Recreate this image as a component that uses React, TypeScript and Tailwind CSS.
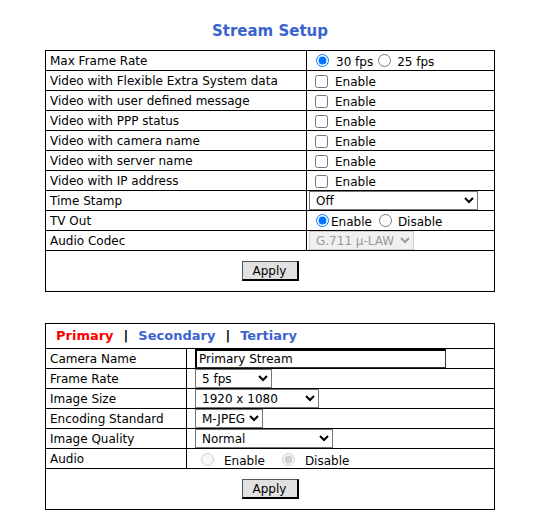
const cell = "border border-black h-[20px] p-0 align-middle";

function Label({ children }: { children: React.ReactNode }) {
  return (
    <td className={`${cell} pl-[4px] whitespace-nowrap`}>
      <div className="h-[19px] flex items-center">{children}</div>
    </td>
  );
}

function Row({ children, className = "" }: { children: React.ReactNode; className?: string }) {
  return <div className={`h-[19px] flex items-center ${className}`}>{children}</div>;
}

function ApplyButton() {
  return (
    <button className="h-[20px] w-[57px] bg-[#e1e1e1] border border-[#555] border-r-2 border-b-2 border-r-black border-b-black text-[12px] text-black leading-none">
      Apply
    </button>
  );
}

function Radio({ checked, disabled, cls }: { checked?: boolean; disabled?: boolean; cls: string }) {
  return (
    <input
      type="radio"
      defaultChecked={checked}
      disabled={disabled}
      className={`w-[13px] h-[13px] m-0 shrink-0 ${cls}`}
    />
  );
}

const enableRows = [
  "Video with Flexible Extra System data",
  "Video with user defined message",
  "Video with PPP status",
  "Video with camera name",
  "Video with server name",
  "Video with IP address",
];

const selectCls =
  "h-[19px] border border-[#767676] bg-white text-[12px] leading-none pl-[2px] block";

export default function App() {
  return (
    <div className="w-[536px] h-[532px] bg-white text-black text-[12px] leading-[18px] font-['Verdana','DejaVu_Sans',sans-serif]">
      <div className="ml-[45px] w-[450px] pt-[20px]">
        <h1 className="text-center text-[15px] font-bold text-[#3a63cf] leading-[22px] h-[30px]">Stream Setup</h1>

        <table className="w-[450px] border-collapse">
          <tbody>
            <tr>
              <Label>Max Frame Rate</Label>
              <td className={`${cell} w-[188px]`}>
                <Row>
                  <Radio checked cls="ml-[9px] mr-[7px]" />
                  <span className="pt-[3px]">30 fps</span>
                  <Radio cls="ml-[5px] mr-[6px]" />
                  <span className="pt-[3px]">25 fps</span>
                </Row>
              </td>
            </tr>
            {enableRows.map((r) => (
              <tr key={r}>
                <Label>{r}</Label>
                <td className={cell}>
                  <Row>
                    <input type="checkbox" className="w-[13px] h-[13px] m-0 ml-[8px] mr-[7px] mt-[1px]" />
                    <span className="pt-[3px]">Enable</span>
                  </Row>
                </td>
              </tr>
            ))}
            <tr>
              <Label>Time Stamp</Label>
              <td className={`${cell} pl-[2px]`}>
                <select className={`${selectCls} w-[169px]`} defaultValue="Off">
                  <option>Off</option>
                </select>
              </td>
            </tr>
            <tr>
              <Label>TV Out</Label>
              <td className={cell}>
                <Row>
                  <Radio checked cls="ml-[9px] mr-[2px]" />
                  <span className="pt-[2px]">Enable</span>
                  <Radio cls="ml-[7px] mr-[6px]" />
                  <span className="pt-[2px]">Disable</span>
                </Row>
              </td>
            </tr>
            <tr>
              <Label>Audio Codec</Label>
              <td className={`${cell} pl-[2px]`}>
                <select disabled className="h-[19px] w-[105px] border border-[#d0d0d0] bg-[#f0f0f0] text-[#9a9a9a] text-[12px] leading-none pl-[2px] block">
                  <option>G.711 μ-LAW</option>
                </select>
              </td>
            </tr>
            <tr>
              <td colSpan={2} className="border border-black h-[41px] text-center align-middle p-0">
                <ApplyButton />
              </td>
            </tr>
          </tbody>
        </table>

        <div className="h-[31px]" />

        <table className="w-[450px] border-collapse">
          <tbody>
            <tr>
              <td colSpan={2} className="border border-black h-[25px] p-0 pl-[10px] font-bold text-[13px]">
                <span className="text-[#ff0000]">Primary</span>
                <span className="mx-[10px] text-black">|</span>
                <span className="text-[#3a63cf]">Secondary</span>
                <span className="mx-[10px] text-black">|</span>
                <span className="text-[#3a63cf]">Tertiary</span>
              </td>
            </tr>
            <tr>
              <td className={`${cell} pl-[4px] w-[141px]`}>
                <Row>Camera Name</Row>
              </td>
              <td className={`${cell} pl-[8px]`}>
                <input
                  defaultValue="Primary Stream"
                  className="h-[19px] w-[251px] border border-[#333] border-t-2 border-l-2 border-t-black border-l-black px-[2px] text-[12px] leading-none block"
                />
              </td>
            </tr>
            <tr>
              <Label>Frame Rate</Label>
              <td className={`${cell} pl-[8px]`}>
                <select className={`${selectCls} w-[77px]`}>
                  <option>5 fps</option>
                </select>
              </td>
            </tr>
            <tr>
              <Label>Image Size</Label>
              <td className={`${cell} pl-[8px]`}>
                <select className={`${selectCls} w-[124px]`}>
                  <option>1920 x 1080</option>
                </select>
              </td>
            </tr>
            <tr>
              <Label>Encoding Standard</Label>
              <td className={`${cell} pl-[8px]`}>
                <select className={`${selectCls} w-[68px]`}>
                  <option>M-JPEG</option>
                </select>
              </td>
            </tr>
            <tr>
              <Label>Image Quality</Label>
              <td className={`${cell} pl-[8px]`}>
                <select className={`${selectCls} w-[138px]`}>
                  <option>Normal</option>
                </select>
              </td>
            </tr>
            <tr>
              <Label>Audio</Label>
              <td className={cell}>
                <Row>
                  <Radio disabled cls="ml-[14px] mr-[10px] mt-[2px]" />
                  <span className="pt-[4px]">Enable</span>
                  <Radio disabled checked cls="ml-[17px] mr-[10px] mt-[2px]" />
                  <span className="pt-[4px]">Disable</span>
                </Row>
              </td>
            </tr>
            <tr>
              <td colSpan={2} className="border border-black h-[41px] text-center align-middle p-0">
                <ApplyButton />
              </td>
            </tr>
          </tbody>
        </table>
      </div>
    </div>
  );
}
